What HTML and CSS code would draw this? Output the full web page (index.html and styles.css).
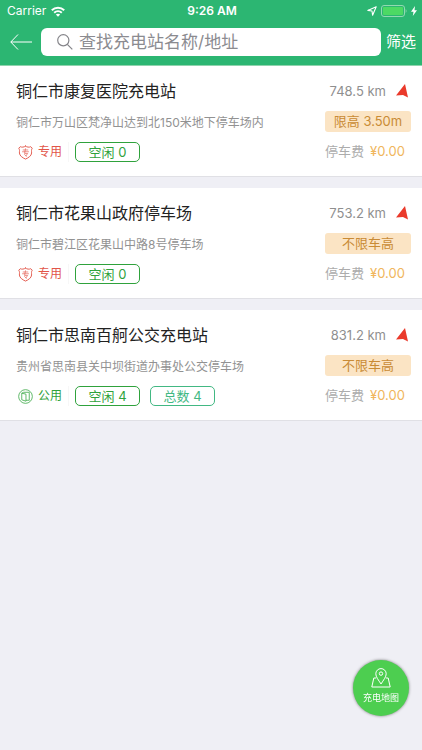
FILE: index.html
```html
<!DOCTYPE html>
<html lang="zh-CN">
<head>
<meta charset="utf-8">
<meta name="viewport" content="width=device-width, initial-scale=1">
<title>充电站</title>
<link rel="stylesheet" href="styles.css">
</head>
<body>
<svg class="defs" aria-hidden="true">
  <symbol id="arrow" viewBox="0 0 12 14"><path d="M9 0 12 13.500 7 11 0 11.500Z" fill="#ea3a2b"/></symbol>
  <symbol id="private" viewBox="0 0 16 16">
    <g fill="none" stroke="#e25549" stroke-linecap="round" stroke-linejoin="round">
      <path d="M8 1.200C6.400 2.500 4 2.600 2.400 1.800L.8 3.400C2 5 1.500 6.700 1.500 8.500 1.700 11.600 4.800 13.600 8 15 11.200 13.600 14.300 11.600 14.500 8.500 14.500 6.700 14 5 15.200 3.400L13.600 1.800C12 2.600 9.600 2.500 8 1.200Z"/>
      <path stroke-width=".7" d="M5.500 5.300H10.500M4.800 7.200H11.200M8 4 7 9H10.300L8.500 11.500M7 10.200 9 12"/>
    </g>
  </symbol>
  <symbol id="public" viewBox="0 0 16 16">
    <g fill="none" stroke="#45ad50" stroke-width=".9">
      <circle cx="8" cy="8" r="7.300"/>
      <path d="M4 4.500 8.500 5.500V13L4 11.500ZM4 4.500 6 3.500H12V12H8.500"/>
    </g>
  </symbol>
</svg>

<header class="header">
  <div class="status">
    <div class="status-left">
      <span>Carrier</span>
      <svg width="14" height="11" viewBox="0 0 14 11" fill="none" stroke="#fff" stroke-width="2"><path d="M.8 4.200C4.300 .8 9.700 .8 13.200 4.200M3.200 6.700C5.400 4.700 8.600 4.700 10.800 6.700"/><path d="M7 10.800 4.800 8.600C6 7.500 8 7.500 9.200 8.600Z" fill="#fff" stroke="none"/></svg>
    </div>
    <strong class="time">9:26 AM</strong>
    <div class="status-right">
      <svg width="10" height="10" viewBox="0 0 10 10" fill="none" stroke="#fff" stroke-width="1.100" stroke-linejoin="round"><path d="M9.200 .8 5.600 9.200 5 5 .8 4.400Z"/></svg>
      <svg width="26" height="12" viewBox="0 0 26 12"><rect x=".5" y=".5" width="23" height="11" rx="2.500" fill="none" stroke="#93d9b1"/><rect x="2" y="2" width="20" height="8" rx="1" fill="#4cd964"/><path d="M24.700 4Q26.300 6 24.700 8Z" fill="#93d9b1"/></svg>
      <svg width="6" height="10" viewBox="0 0 6 10"><path d="M4 0 0 5.800H2.500L1.800 10 6 4.200H3.500Z" fill="#fff"/></svg>
    </div>
  </div>
  <form class="searchbar">
    <button class="back" type="button" aria-label="返回"><svg width="22" height="16" viewBox="0 0 22 16" fill="none" stroke="#fff"><path d="M8 .5.8 8 8 15.500M.8 8H22"/></svg></button>
    <label class="search">
      <svg width="16" height="16" viewBox="0 0 16 16" fill="none" stroke="#85858a" stroke-width="1.200"><circle cx="6.300" cy="6.300" r="5.600"/><path d="M10.300 10.300 15.300 15.300"/></svg>
      <input type="search" placeholder="查找充电站名称/地址" aria-label="查找充电站名称/地址">
    </label>
    <button class="filter" type="button">筛选</button>
  </form>
</header>

<main class="list">
  <article class="card">
    <div class="info">
      <h2>铜仁市康复医院充电站</h2>
      <p class="address">铜仁市万山区梵净山达到北150米地下停车场内</p>
      <div class="tags">
        <span class="kind private"><svg width="15" height="15"><use href="#private"/></svg>专用</span>
        <span class="tag">空闲 0</span>
      </div>
    </div>
    <div class="side">
      <a class="distance" href="#">748.5 km<svg width="12" height="14"><use href="#arrow"/></svg></a>
      <span class="limit">限高 3.50m</span>
      <div class="fee">停车费<span class="price">¥0.00</span></div>
    </div>
  </article>
  <article class="card">
    <div class="info">
      <h2>铜仁市花果山政府停车场</h2>
      <p class="address">铜仁市碧江区花果山中路8号停车场</p>
      <div class="tags">
        <span class="kind private"><svg width="15" height="15"><use href="#private"/></svg>专用</span>
        <span class="tag">空闲 0</span>
      </div>
    </div>
    <div class="side">
      <a class="distance" href="#">753.2 km<svg width="12" height="14"><use href="#arrow"/></svg></a>
      <span class="limit">不限车高</span>
      <div class="fee">停车费<span class="price">¥0.00</span></div>
    </div>
  </article>
  <article class="card">
    <div class="info">
      <h2>铜仁市思南百舸公交充电站</h2>
      <p class="address">贵州省思南县关中坝街道办事处公交停车场</p>
      <div class="tags">
        <span class="kind public"><svg width="15" height="15"><use href="#public"/></svg>公用</span>
        <span class="tag">空闲 4</span>
        <span class="tag total">总数 4</span>
      </div>
    </div>
    <div class="side">
      <a class="distance" href="#">831.2 km<svg width="12" height="14"><use href="#arrow"/></svg></a>
      <span class="limit">不限车高</span>
      <div class="fee">停车费<span class="price">¥0.00</span></div>
    </div>
  </article>
</main>

<button class="map" type="button">
  <svg width="20" height="20" viewBox="0 0 20 20" fill="none" stroke="#fff" stroke-linejoin="round"><path d="M10 16C7.500 12 4.800 9 4.800 5.800A5.200 5.200 0 0 1 15.200 5.800C15.200 9 12.500 12 10 16Z"/><circle cx="10" cy="5.600" r="1.700"/><path d="M5.200 10H2.800L.8 19H19.200L17.200 10H14.800"/></svg>
  <span>充电地图</span>
</button>
</body>
</html>
```

FILE: styles.css
```css
* { box-sizing: border-box; }

body {
  margin: 0;
  background: #efeff5;
  color: #222;
  font-family: Inter, "Noto Sans CJK SC", sans-serif;
  font-size: 13px;
  line-height: 20px;
}

button {
  padding: 0;
  border: 0;
  background: none;
  color: #fff;
  font: inherit;
}

svg { display: block; flex: none; }

.defs { position: absolute; width: 0; height: 0; }

.header {
  padding-bottom: 9px;
  border-bottom: 1px solid #8fd3ad;
  background: #2cb672;
  color: #fff;
}

.status {
  display: grid;
  grid-template-columns: 1fr auto 1fr;
  align-items: center;
  height: 22px;
  padding: 0 5px 0 7px;
  font-size: 12px;
}

.status-left { display: flex; align-items: center; gap: 5px; }

.time { font-weight: 600; }

.status-right {
  display: flex;
  align-items: center;
  justify-content: flex-end;
  gap: 4px;
}

.searchbar {
  display: flex;
  align-items: center;
  margin-top: 6px;
  padding: 0 6px 0 10px;
}

.back { width: 31px; }

.search {
  display: flex;
  flex: 1;
  align-items: center;
  gap: 6px;
  height: 28px;
  padding: 0 16px;
  border-radius: 6px;
  background: #fff;
}

.search input {
  flex: 1;
  min-width: 0;
  padding: 0;
  border: 0;
  outline: 0;
  background: none;
  color: #222;
  font: inherit;
  font-size: 17px;
}

.search input::placeholder { color: #8b8b90; opacity: 1; }

.filter { margin-left: 5px; font-size: 15px; line-height: 22px; }

.list { display: grid; gap: 11px; }

.card {
  display: flex;
  justify-content: space-between;
  padding: 13px 11px 14px 16px;
  border-bottom: 1px solid #e0e0e5;
  background: #fff;
}

.info, .side { display: flex; flex-direction: column; }

.info { gap: 10px; }

.side { gap: 8px; width: 97px; padding-left: 11px; }

h2 {
  margin: 0;
  font-size: 16px;
  font-weight: 400;
  line-height: 24px;
}

.address {
  margin: 0;
  color: #929292;
  font-size: 12px;
  line-height: 19px;
}

.tags { display: flex; align-items: center; gap: 10px; }

.kind {
  display: flex;
  align-items: center;
  gap: 5px;
  margin-right: -4px;
  padding: 0 6px 0 2px;
  border-right: 1px solid #f7f7f7;
  font-size: 12px;
}

.private { color: #e25549; }
.public { color: #2fa23c; }

.tag {
  width: 65px;
  border: 1px solid #2fa23c;
  border-radius: 5px;
  color: #2fa23c;
  line-height: 18px;
  text-align: center;
}

.total { border-color: #42b883; color: #42b883; }

.distance {
  display: flex;
  align-items: center;
  justify-content: flex-end;
  gap: 10px;
  height: 24px;
  padding-right: 3px;
  color: #8f8f8f;
  text-decoration: none;
  white-space: nowrap;
}

.limit {
  border-radius: 3px;
  background: #fbe4c4;
  color: #c98b35;
  line-height: 21px;
  text-align: center;
}

.fee { display: flex; gap: 6px; color: #acacac; line-height: 22px; }

.price { color: #f0b65c; }

.map {
  position: fixed;
  right: 13px;
  bottom: 34px;
  display: flex;
  flex-direction: column;
  align-items: center;
  gap: 1px;
  width: 56px;
  height: 56px;
  padding-top: 8px;
  border-radius: 50%;
  background: #4dce50;
  box-shadow: 0 0 3px #777;
  font-size: 9px;
  line-height: 18px;
}
```
